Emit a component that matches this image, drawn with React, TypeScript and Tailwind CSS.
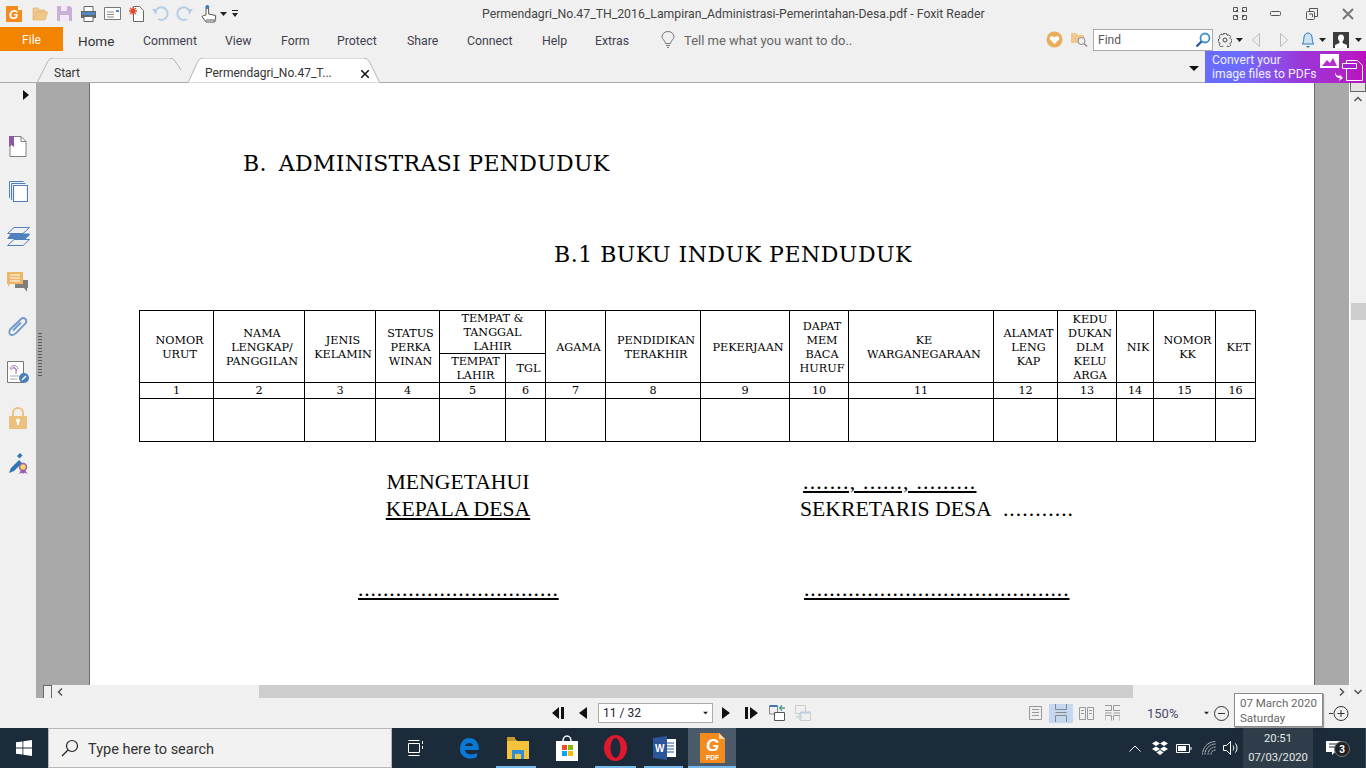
import type { ReactNode } from "react";

const uiFont = "font-['Roboto','Liberation_Sans',sans-serif]";

type Col = { w: string; lines: string[] };

const columnsBefore: Col[] = [
  { w: "w-[74px]", lines: ["NOMOR", "URUT"] },
  { w: "w-[91px]", lines: ["NAMA", "LENGKAP/", "PANGGILAN"] },
  { w: "w-[71px]", lines: ["JENIS", "KELAMIN"] },
  { w: "w-[64px]", lines: ["STATUS", "PERKA", "WINAN"] },
];

const columnsAfter: Col[] = [
  { w: "w-[60px]", lines: ["AGAMA"] },
  { w: "w-[95px]", lines: ["PENDIDIKAN", "TERAKHIR"] },
  { w: "w-[89px]", lines: ["PEKERJAAN"] },
  { w: "w-[59px]", lines: ["DAPAT", "MEM", "BACA", "HURUF"] },
  { w: "w-[145px]", lines: ["KE", "WARGANEGARAAN"] },
  { w: "w-[64px]", lines: ["ALAMAT", "LENG", "KAP"] },
  { w: "w-[59px]", lines: ["KEDU", "DUKAN", "DLM", "KELU", "ARGA"] },
  { w: "w-[37px]", lines: ["NIK"] },
  { w: "w-[62px]", lines: ["NOMOR", "KK"] },
  { w: "w-[40px]", lines: ["KET"] },
];

const numbers = Array.from({ length: 16 }, (_, i) => i + 1);

function Cell({ lines, rowSpan, colSpan }: { lines: string[]; rowSpan?: number; colSpan?: number }) {
  return (
    <th rowSpan={rowSpan} colSpan={colSpan} className={`border border-black p-0 text-center font-normal align-middle whitespace-pre-line ${colSpan ? "" : "pl-[6px]"}`}>
      <span className="relative top-px">{lines.join("\n")}</span>
    </th>
  );
}

function Caret({ className = "" }: { className?: string }) {
  return (
    <svg width="7" height="4" viewBox="0 0 7 4" className={className}>
      <path d="M0 0h7L3.5 4z" fill="#222" />
    </svg>
  );
}

function AppIcon() {
  return (
    <svg width="18" height="18" viewBox="0 0 18 18">
      <path d="M1 1h12l4 4v12H1z" fill="#f58a1f" />
      <path d="M13 1l4 4h-4z" fill="#fff" />
      <text x="4" y="14" fontSize="12" fontWeight="700" fontStyle="italic" fill="#fff" fontFamily="Liberation Sans">G</text>
    </svg>
  );
}

function TopBar() {
  return (
    <div className="flex h-[27px] items-center bg-[#f0f0f0] relative">
      <div className="ml-[5px] flex items-center">
        <AppIcon />
        <svg width="17" height="15" viewBox="0 0 17 15" className="ml-[9px]">
          <path d="M1 14V2h5l2 2h5v2H5L1 14h12l3-8H5" fill="#f0c78a" stroke="#e5b673" strokeWidth=".7" />
        </svg>
        <svg width="15" height="15" viewBox="0 0 15 15" className="ml-[8px]">
          <path d="M0 0h13l2 2v13H0z" fill="#c9aed6" />
          <path d="M4 0h6v5H4zM3 9h9v6H3z" fill="#f0e9f3" />
        </svg>
        <svg width="17" height="16" viewBox="0 0 17 16" className="ml-[8px]">
          <path d="M4 .5h9v5H4z" fill="#fff" stroke="#666" />
          <path d="M1 5h15v7H1z" fill="#666" />
          <path d="M2 6h13v3H2z" fill="#4d8ac4" />
          <path d="M4 10.5h9v5H4z" fill="#fff" stroke="#666" />
        </svg>
        <svg width="17" height="13" viewBox="0 0 17 13" className="ml-[7px]">
          <path d="M.5.5h16v12H.5z" fill="#fff" stroke="#777" />
          <path d="M3 5h7M3 7.500h7M3 10h7" stroke="#888" />
          <path d="M12 3h3v2h-3z" fill="#4d8ac4" />
        </svg>
        <svg width="15" height="16" viewBox="0 0 15 16" className="ml-[8px]">
          <path d="M4.500 4.500V.5h6l4 4v11H4.500z" fill="#fff" stroke="#666" />
          <path d="M4 1v8M0 5h8M1 2l6 6M7 2L1 8" stroke="#e0492c" strokeWidth="1.300" />
        </svg>
        <svg width="17" height="15" viewBox="0 0 17 15" className="ml-[8px]" fill="none">
          <path d="M3 7a6.300 6.300 0 1 1 3 6" stroke="#b4cee6" strokeWidth="2" />
          <path d="M0 3l5 0-1 6z" fill="#b4cee6" />
        </svg>
        <svg width="17" height="15" viewBox="0 0 17 15" className="ml-[7px]" fill="none">
          <path d="M14 7a6.300 6.300 0 1 0-3 6" stroke="#b4cee6" strokeWidth="2" />
          <path d="M17 3l-5 0 1 6z" fill="#b4cee6" />
        </svg>
        <svg width="17" height="18" viewBox="0 0 17 18" className="ml-[8px]" fill="none">
          <path d="M5 10V4a1.300 1.300 0 0 1 2.600 0v5l7 1.500v4l-1 2.500H5L1 11.500l1.500-1z" fill="#fff" stroke="#555" />
          <circle cx="6.300" cy="2" r="2" fill="#3f78b5" />
          <path d="M5 15h9" stroke="#555" />
        </svg>
        <Caret className="ml-[2px]" />
        <svg width="6" height="7" viewBox="0 0 6 7" className="ml-[5px]">
          <path d="M0 0h6v1H0zM0 3h6L3 7z" fill="#222" />
        </svg>
      </div>
      <div className={`absolute left-[482px] top-[5px] text-[12.250px] leading-[18px] text-[#444] whitespace-nowrap ${uiFont}`}>
        Permendagri_No.47_TH_2016_Lampiran_Administrasi-Pemerintahan-Desa.pdf - Foxit Reader
      </div>
      <div className="ml-auto flex items-center">
        <svg width="14" height="13" viewBox="0 0 14 13" fill="none" stroke="#555">
          <path d="M.5.5h4v4h-4zM9.500.5h4v4h-4zM.5 8.500h4v4h-4zM9.500 8.500h4v4h-4z" />
          <path d="M3 3l2 2M11 3L9 5M3 10l2-2M11 10L9 8" />
        </svg>
        <svg width="11" height="5" viewBox="0 0 11 5" fill="none" stroke="#555" className="ml-[23px]">
          <rect x=".5" y=".5" width="10" height="4" rx="1" />
        </svg>
        <svg width="12" height="12" viewBox="0 0 12 12" fill="none" stroke="#555" className="ml-[25px]">
          <rect x=".5" y="3.500" width="8" height="8" rx="1" />
          <path d="M3.500 3V.5h8v8H9" />
          <path d="M3 6h3.500v3" />
        </svg>
        <svg width="12" height="12" viewBox="0 0 12 12" fill="none" stroke="#777" strokeWidth="2" className="ml-[24px] mr-[12px]">
          <path d="M1 1l10 10M11 1L1 11" />
        </svg>
      </div>
    </div>
  );
}

const menus: [string, string][] = [
  ["Comment", "w-[82px]"],
  ["View", "w-[56px]"],
  ["Form", "w-[56px]"],
  ["Protect", "w-[70px]"],
  ["Share", "w-[60px]"],
  ["Connect", "w-[75px]"],
  ["Help", "w-[53px]"],
  ["Extras", "w-[66px]"],
];

function RibbonTabs() {
  return (
    <div className={`flex h-[25px] bg-[#f0f0f0] ${uiFont}`}>
      <div className="flex h-[24px] w-[63px] items-center justify-center bg-[#f38400] pt-[2px] text-[12px] text-white">File</div>
      <div className="ml-[15px] w-[65px] text-[13.500px] leading-[29px] text-[#333]">Home</div>
      {menus.map(([label, w]) => (
        <div key={label} className={`${w} text-[12.300px] leading-[29px] text-[#3f3f4f]`}>
          {label}
        </div>
      ))}
      <div className="flex items-center">
        <svg width="14" height="17" viewBox="0 0 14 17" fill="none" stroke="#777">
          <path d="M4.500 12.500C4 9 1 8.500 1 5.500a6 5 0 0 1 12 0c0 3-3 3.500-3.500 7zM5 14.500h4M6 16.500h2" />
        </svg>
        <span className="ml-[9px] pt-[2px] text-[13px] text-[#666]">Tell me what you want to do..</span>
      </div>
      <div className="ml-auto flex items-center">
        <svg width="17" height="17" viewBox="0 0 17 17">
          <circle cx="8.500" cy="8.500" r="8" fill="#e9ad5e" />
          <path d="M8.500 13L4 8.500C2.500 6 6.500 3.500 8.500 6.500c2-3 6-.5 4.500 2z" fill="#fff" />
        </svg>
        <svg width="17" height="15" viewBox="0 0 17 15" className="ml-[8px]">
          <path d="M0 1h5l2 2h6v8H0z" fill="#efc88f" />
          <circle cx="10.500" cy="9" r="3.500" fill="#f0f0f0" stroke="#888" />
          <path d="M13 11.500l3 3" stroke="#888" strokeWidth="1.300" />
        </svg>
        <div className="ml-[5px] flex h-[22px] w-[120px] items-center border border-[#aaa] bg-white pl-[4px] text-[12px] text-[#555]">
          Find
          <svg width="16" height="16" viewBox="0 0 16 16" fill="none" className="ml-auto mr-[1px]">
            <circle cx="10" cy="6" r="4.500" stroke="#3f8fd0" strokeWidth="1.800" />
            <path d="M6.500 9.500L1.500 14.500" stroke="#2c5f94" strokeWidth="2.400" />
          </svg>
        </div>
        <svg width="14" height="14" viewBox="0 0 14 14" fill="none" stroke="#444" className="ml-[5px]">
          <path d="M5.500.5h3l.5 2 2-.8 1.800 2-1 1.800 1.700.9v2.800l-1.700.9 1 1.800-1.800 2-2-.8-.5 1.400h-3l-.5-1.400-2 .8-1.800-2 1-1.800-1.700-.9V5.800l1.700-.9-1-1.800 1.800-2 2 .8z" strokeDasharray="2 .6" />
          <circle cx="7" cy="7" r="2" />
        </svg>
        <Caret className="ml-[4px]" />
        <svg width="8" height="14" viewBox="0 0 8 14" fill="none" stroke="#bbb" className="ml-[9px]">
          <path d="M7.500.5v13L.5 7z" />
        </svg>
        <svg width="8" height="14" viewBox="0 0 8 14" fill="none" stroke="#bbb" className="ml-[20px]">
          <path d="M.5.5v13L7.500 7z" />
        </svg>
        <svg width="14" height="16" viewBox="0 0 14 16" className="ml-[13px]">
          <path d="M1 12c2-1 1.500-4 2-7 .5-3 2.500-4 4-4s3.500 1 4 4c.5 3 0 6 2 7z" fill="#cfe3f5" stroke="#2e78ba" />
          <path d="M5 14h4l-2 2z" fill="#2e78ba" />
        </svg>
        <Caret className="ml-[4px]" />
        <svg width="16" height="16" viewBox="0 0 16 16" className="ml-[7px]">
          <path d="M0 0h16v16H0z" fill="#3c3c3c" />
          <path d="M8 2.500c2 0 3 1.500 3 3.500 0 1.500-.8 2.800-1.500 3.500v1.500L14 13v3H2v-3l4.500-2V9.500C5.800 8.800 5 7.500 5 6c0-2 1-3.500 3-3.500z" fill="#fff" />
        </svg>
        <Caret className="ml-[6px] mr-[4px]" />
      </div>
    </div>
  );
}

function DocTabs() {
  return (
    <div className={`relative flex h-[31px] border-b border-[#aaa] bg-[#f0f0f0] ${uiFont}`}>
      <svg width="345" height="25" viewBox="0 0 345 25" className="absolute left-[37px] top-[6px]" fill="none">
        <path d="M0 25L11 3q2-3 5-3h116q4 0 6 3l6 9" stroke="#b5b5b5" />
        <path d="M151 25L161 3q2-3 5-3h160q4 0 6 3l11 22z" fill="#fff" stroke="#b5b5b5" />
      </svg>
      <span className="absolute left-[54px] top-[13px] text-[12px] leading-[16px] text-[#333]">Start</span>
      <span className="absolute left-[205px] top-[13px] text-[12px] leading-[16px] text-[#333]">Permendagri_No.47_T...</span>
      <svg width="8" height="8" viewBox="0 0 8 8" className="absolute left-[361px] top-[18px]" stroke="#111" strokeWidth="1.500">
        <path d="M0 0l8 8M8 0L0 8" />
      </svg>
      <svg width="10" height="5" viewBox="0 0 10 5" className="ml-auto mr-[6px] mt-[14px]">
        <path d="M0 0h10L5 5z" fill="#111" />
      </svg>
      <div className="relative -mt-px flex h-[32px] w-[161px] items-start bg-gradient-to-r from-[#6a6cff] from-20% via-[#9a35d8] via-60% to-[#bb0cc0] pl-[7px] pt-[3px] text-[12.200px] leading-[13.500px] text-[#f0eeff]">
        <span className="whitespace-nowrap">
          Convert your
          <br />
          image files to PDFs
        </span>
        <svg width="44" height="28" viewBox="0 0 44 28" className="absolute left-[115px] top-[3px]" fill="none">
          <path d="M0 0h19v14H0z" fill="#fff" />
          <path d="M2 12l5-6 3 3 3-5 4 8z" fill="#b52dd0" />
          <path d="M26.500 6.500h11l5 5v15h-16z" stroke="#fff" />
          <path d="M22.500 9.500h14v5h-14z" fill="#a51fd0" stroke="#fff" />
          <path d="M15 18c1 3 2 4 5 4l-1-2 4 4-4 3 1-3c-3 0-5-2-5-6z" fill="#fff" />
        </svg>
      </div>
    </div>
  );
}

function SideIcon({ children }: { children: ReactNode }) {
  return <div className="flex h-[45.300px] items-center justify-center">{children}</div>;
}

function Sidebar() {
  return (
    <div className="w-[36px] shrink-0 bg-[#f0f0f0]">
      <div className="flex h-[40.500px] justify-end pr-[7px] pt-[7px]">
        <svg width="6" height="10" viewBox="0 0 6 10">
          <path d="M0 0l6 5-6 5z" fill="#111" />
        </svg>
      </div>
      <SideIcon>
        <svg width="18" height="21" viewBox="0 0 18 21" fill="none">
          <path d="M1 .5h11l5 5v15H1z" fill="#fff" stroke="#808080" />
          <path d="M12 .5v5h5" stroke="#808080" />
          <path d="M0 0h5v11L2.500 9 0 11z" fill="#8e58a8" />
        </svg>
      </SideIcon>
      <SideIcon>
        <svg width="19" height="21" viewBox="0 0 19 21" fill="none" stroke="#4f81bd">
          <path d="M.5 17V.5h14M2.500 19V2.500h14" />
          <path d="M4.500 4.500h14v16h-14z" fill="#fff" strokeWidth="1.200" />
        </svg>
      </SideIcon>
      <SideIcon>
        <svg width="23" height="19" viewBox="0 0 23 19" fill="none" stroke="#4f81bd">
          <path d="M7 .5h15.500L16 6.500H.5zM.5 11.500l3-3M22.500 8l-5 4" />
          <path d="M4 7h18.500l-4 4.500H1z" fill="#4f81bd" />
          <path d="M7 12.500h15.500L16 18.500H.5zM7 12.500" />
        </svg>
      </SideIcon>
      <SideIcon>
        <svg width="22" height="21" viewBox="0 0 22 21">
          <path d="M8 8h13v8h-1v4l-3-4H8z" fill="#7f7f7f" />
          <path d="M0 0h16v12H3l-2 3v-3H0z" fill="#edb666" />
          <path d="M3 3h10M3 6h10M3 9h10" stroke="#fff" />
        </svg>
      </SideIcon>
      <SideIcon>
        <svg width="20" height="21" viewBox="0 0 20 21" fill="none" stroke="#6d9ac9" strokeWidth="1.800">
          <path d="M6 9l7-7c3-2.500 7 1 4.500 4.500L8 16c-2.500 3-7.500 3-6.500-2 .2-1 1-2 1.500-2.500L11 4" />
          <path d="M5 13.500l8-8" />
        </svg>
      </SideIcon>
      <SideIcon>
        <svg width="23" height="23" viewBox="0 0 23 23" fill="none">
          <path d="M.5.500h16v21H.5z" fill="#fff" stroke="#777" />
          <path d="M3 8c1-4 7-5 8 0M4 9c1-3 5-3 6 1M6 7c2-1 3 1 3 3v3" stroke="#a86cc1" />
          <path d="M3 15h9M3 18h7" stroke="#aaa" />
          <circle cx="17" cy="17" r="5" fill="#4a7fb8" />
          <path d="M15 19l4-4" stroke="#fff" strokeWidth="1.500" />
        </svg>
      </SideIcon>
      <SideIcon>
        <svg width="18" height="22" viewBox="0 0 18 22" fill="none">
          <path d="M4 9V6a5 5 0 0 1 10 0v3" stroke="#ecc07f" strokeWidth="2" />
          <path d="M0 9h18v13H0z" fill="#ecc07f" />
          <path d="M8 13h2v5H8z" fill="#fff" />
          <circle cx="9" cy="13.500" r="2" fill="#fff" />
        </svg>
      </SideIcon>
      <SideIcon>
        <svg width="21" height="21" viewBox="0 0 21 21" fill="none">
          <path d="M1 20l2-5 8-8 3 3-8 8z" fill="#2f75b5" />
          <path d="M9 3l3-3 2.500 2.500-3 3z" fill="#2f75b5" />
          <circle cx="15" cy="14" r="3.500" fill="#f3da5c" stroke="#9a5bb5" strokeWidth="1.500" />
          <path d="M11 21l2-4h4l2.500 4-3-1.200-1.500 1-1.500-1z" fill="#9a5bb5" />
        </svg>
      </SideIcon>
    </div>
  );
}

function Page() {
  return (
    <div className="min-w-0 flex-1 overflow-hidden border-x border-[#6b6b6b] bg-white text-black">
      <div className="ml-[153px] mt-[66px] h-[30px] whitespace-nowrap font-['DejaVu_Serif',serif] text-[22px] leading-[30px] tracking-[0.3px]">
        B.<span className="ml-[12px]">ADMINISTRASI PENDUDUK</span>
      </div>
      <div className="ml-[464px] mt-[61px] h-[30px] whitespace-nowrap font-['DejaVu_Serif',serif] text-[22px] leading-[30px] tracking-[0.5px]">
        B.1 BUKU INDUK PENDUDUK
      </div>
      <table className="ml-[49px] mt-[40px] w-[1117px] table-fixed border-collapse font-['DejaVu_Serif',serif] text-[11.200px] leading-[14px]">
        <colgroup>
          {columnsBefore.map((c) => (
            <col key={c.lines[0]} className={c.w} />
          ))}
          <col className="w-[66px]" />
          <col className="w-[40px]" />
          {columnsAfter.map((c) => (
            <col key={c.lines[0]} className={c.w} />
          ))}
        </colgroup>
        <thead>
          <tr className="h-[43px]">
            {columnsBefore.map((c) => (
              <Cell key={c.lines[0]} lines={c.lines} rowSpan={2} />
            ))}
            <Cell lines={["TEMPAT &", "TANGGAL", "LAHIR"]} colSpan={2} />
            {columnsAfter.map((c) => (
              <Cell key={c.lines[0]} lines={c.lines} rowSpan={2} />
            ))}
          </tr>
          <tr className="h-[29px]">
            <Cell lines={["TEMPAT", "LAHIR"]} />
            <Cell lines={["TGL"]} />
          </tr>
        </thead>
        <tbody>
          <tr className="h-[16px]">
            {numbers.map((n) => (
              <td key={n} className="border border-black p-0 text-center leading-[14px]">
                {n}
              </td>
            ))}
          </tr>
          <tr className="h-[43px]">
            {numbers.map((n) => (
              <td key={n} className="border border-black p-0" />
            ))}
          </tr>
        </tbody>
      </table>
      <div className="mt-[27px] flex font-['Liberation_Serif',serif] text-[21.700px] leading-[27px]">
        <div className="ml-[268px] w-[200px] text-center">
          <div>MENGETAHUI</div>
          <div className="underline underline-offset-2">KEPALA DESA</div>
          <div className="mt-[53px] tracking-[0.85px] underline decoration-2 underline-offset-2">................................</div>
        </div>
        <div className="ml-[242px]">
          <div className="ml-[3px] tracking-[1.250px] underline decoration-2 underline-offset-2">......., ......, .........</div>
          <div>
            SEKRETARIS DESA <span className="ml-[7px] tracking-[1.050px]">...........</span>
          </div>
          <div className="ml-[4px] mt-[53px] tracking-[0.9px] underline decoration-2 underline-offset-2">..........................................</div>
        </div>
      </div>
    </div>
  );
}

function ViewIcon({ children, active }: { children: ReactNode; active?: boolean }) {
  return (
    <div className={`flex h-[19px] items-center justify-center ${active ? "bg-[#c3d7f0]" : ""}`}>{children}</div>
  );
}

function StatusBar() {
  return (
    <div className={`relative flex h-[30px] items-center bg-[#f0f0f0] ${uiFont}`}>
      <svg width="14" height="12" viewBox="0 0 14 12" className="ml-[552px]" fill="#111">
        <path d="M7 0v12L0 6zM9 0h3v12H9z" />
      </svg>
      <svg width="8" height="12" viewBox="0 0 8 12" className="ml-[13px]" fill="#111">
        <path d="M8 0v12L0 6z" />
      </svg>
      <div className="ml-[11px] flex h-[20px] w-[115px] items-center border border-[#aaa] bg-white pl-[4px] text-[12px] text-[#223]">
        11 / 32
        <Caret className="ml-auto mr-[3px] scale-75" />
      </div>
      <svg width="8" height="12" viewBox="0 0 8 12" className="ml-[9px]" fill="#111">
        <path d="M0 0v12l8-6z" />
      </svg>
      <svg width="14" height="12" viewBox="0 0 14 12" className="ml-[15px]" fill="#111">
        <path d="M0 0h3v12H0zM5 0v12l8-6z" />
      </svg>
      <svg width="17" height="16" viewBox="0 0 17 16" className="ml-[10px]" fill="none">
        <path d="M.5 1h8v8h-8z" stroke="#888" />
        <path d="M.5 1h8" stroke="#3f78b5" strokeWidth="2" />
        <path d="M5.500 7.500h10v8h-10z" fill="#fff" stroke="#555" />
        <path d="M16 3h-5M13 .5L10.500 3 13 5.500" stroke="#4aa08e" strokeWidth="1.300" />
      </svg>
      <svg width="17" height="16" viewBox="0 0 17 16" className="ml-[9px]" fill="none">
        <path d="M.5.500h10v8h-10z" stroke="#ccc" />
        <path d="M5.500 7.500h10v8h-10z" fill="#f0f0f0" stroke="#ccc" />
        <path d="M5.500 7.500h10" stroke="#b9cde3" strokeWidth="2" />
        <path d="M1 12h5M4 9.500L6.500 12 4 14.500" stroke="#bfdad3" strokeWidth="1.300" />
      </svg>
      <div className="ml-[217px]">
        <ViewIcon>
          <svg width="13" height="14" viewBox="0 0 13 14" fill="none" stroke="#999">
            <path d="M.5.500h12v13H.5zM3 3.500h7M3 6.500h7M3 9.500h7" />
          </svg>
        </ViewIcon>
      </div>
      <div className="ml-[7px] w-[24px]">
        <ViewIcon active>
          <svg width="12" height="18" viewBox="0 0 12 18" fill="none" stroke="#888">
            <path d="M.5 0v5.500h11V0M.5 8.500h11M.5 18v-6.500h11V18" />
          </svg>
        </ViewIcon>
      </div>
      <div className="ml-[6px]">
        <ViewIcon>
          <svg width="15" height="13" viewBox="0 0 15 13" fill="none" stroke="#999">
            <path d="M.5.500h6v12h-6zM8.500.500h6v12h-6zM2 3.500h3M2 6.500h3M10 3.500h3M10 6.500h3" />
          </svg>
        </ViewIcon>
      </div>
      <div className="ml-[11px]">
        <ViewIcon>
          <svg width="15" height="16" viewBox="0 0 15 16" fill="none" stroke="#999">
            <path d="M0 .5h6.500v5H0M15 .5H8.500v5H15M0 8h6.500M15 8H8.500M0 15.500v-5h6.500v5M15 15.500v-5H8.500v5" />
          </svg>
        </ViewIcon>
      </div>
      <span className="ml-[27px] w-[32px] whitespace-nowrap pt-[2px] text-[13px] text-[#4a4a6a]">150%</span>
      <Caret className="ml-[24px] scale-75" />
      <svg width="15" height="15" viewBox="0 0 15 15" fill="none" stroke="#333" className="ml-[4px]">
        <circle cx="7.500" cy="7.500" r="7" />
        <path d="M4 7.500h7" />
      </svg>
      <svg width="20" height="15" viewBox="0 0 20 15" fill="none" stroke="#333" className="ml-[100px]">
        <path d="M0 7.500h4" />
        <circle cx="12" cy="7.500" r="7" />
        <path d="M8.500 7.500h7M12 4v7" />
      </svg>
      <div className="absolute left-[1234px] top-[-5px] h-[34px] w-[89px] border border-[#8a8a8a] bg-white pl-[5px] pt-[2px] text-[11.500px] leading-[15px] text-[#666] shadow-[1px_1px_1px_rgba(0,0,0,0.35)]">
        07 March 2020
        <br />
        Saturday
      </div>
    </div>
  );
}

function Taskbar() {
  return (
    <div className={`flex h-[40px] items-stretch bg-[#1c2b3a] ${uiFont}`}>
      <div className="flex w-[48px] items-center justify-center">
        <svg width="16" height="16" viewBox="0 0 16 16" fill="#fff">
          <path d="M0 2.300l6.500-.9v6.200H0zM7.300 1.300L16 0v7.600H7.300zM0 8.400h6.500v6.200L0 13.700zM7.300 8.400H16V16l-8.700-1.200z" />
        </svg>
      </div>
      <div className="flex w-[344px] items-center border border-[#b8b8b8] bg-[#f2f2f2] pl-[12px] text-[14.500px] text-[#333]">
        <svg width="18" height="18" viewBox="0 0 18 18" fill="none" stroke="#222" strokeWidth="1.200">
          <circle cx="11" cy="7" r="5.500" />
          <path d="M7 11l-6 6" />
        </svg>
        <span className="ml-[9px] mt-[3px]">Type here to search</span>
      </div>
      <div className="flex w-[52px] items-center pl-[16px]">
        <svg width="16" height="18" viewBox="0 0 16 18" fill="none" stroke="#fff">
          <path d="M.5 4.500h11v9H.5zM.5 1.500h11M.5 16.500h11M14.500 2v3M14.500 7v3" />
        </svg>
      </div>
      <div className="flex w-[49px] items-center justify-center">
        <svg width="20" height="21" viewBox="0 0 20 21">
          <path d="M10 0c6 0 10 4 10 12H6c0 4 6 6 12 3v4c-8 4-18 0-17-9C1.500 4 5 0 10 0zm-4 8h8c0-4-7-4-8 0z" fill="#0a78d7" />
        </svg>
      </div>
      <div className="relative flex w-[49px] items-center justify-center">
        <svg width="22" height="22" viewBox="0 0 22 22">
          <path d="M0 2h8l2 2h12v18H0z" fill="#f5c33b" />
          <path d="M0 0h8v4H0z" fill="#c99a25" />
          <path d="M5 13h12v9h-3v-5H8v5H5z" fill="#2c8fd8" />
        </svg>
        <div className="absolute bottom-0 left-[3px] h-[2px] w-[40px] bg-[#76b9ed]" />
      </div>
      <div className="flex w-[49px] items-center justify-center">
        <svg width="22" height="26" viewBox="0 0 22 26">
          <path d="M7 6a4 5 0 0 1 8 0" fill="none" stroke="#fff" strokeWidth="1.500" />
          <path d="M0 6h22v20H0z" fill="#fff" />
          <path d="M6 10h5v5H6z" fill="#f25022" />
          <path d="M12 10h5v5h-5z" fill="#7fba00" />
          <path d="M6 16h5v5H6z" fill="#00a4ef" />
          <path d="M12 16h5v5h-5z" fill="#ffb900" />
        </svg>
      </div>
      <div className="relative flex w-[49px] items-center justify-center">
        <svg width="23" height="26" viewBox="0 0 23 26">
          <ellipse cx="11.500" cy="13" rx="11.500" ry="13" fill="#e0182d" />
          <ellipse cx="11.500" cy="13" rx="5" ry="10" fill="#1c2b3a" />
        </svg>
        <div className="absolute bottom-0 left-[4px] h-[2px] w-[41px] bg-[#76b9ed]" />
      </div>
      <div className="relative flex w-[48px] items-center justify-center">
        <svg width="23" height="24" viewBox="0 0 23 24">
          <path d="M9 3h14v18H9z" fill="#fff" />
          <path d="M11 7h10M11 10h10M11 13h10M11 16h10" stroke="#2b579a" />
          <path d="M0 2l14-2v24L0 22z" fill="#2b579a" />
          <text x="2" y="16" fontSize="10" fontWeight="700" fill="#fff" fontFamily="Liberation Sans">W</text>
        </svg>
        <div className="absolute bottom-0 left-[4px] h-[2px] w-[39px] bg-[#76b9ed]" />
      </div>
      <div className="relative flex w-[48px] items-center justify-center bg-[#4a5a68]">
        <svg width="25" height="30" viewBox="0 0 25 30">
          <path d="M0 0h19l6 6v24H0z" fill="#f58a1f" />
          <path d="M19 0l6 6h-6z" fill="#fbd9a8" />
          <text x="6" y="18" fontSize="17" fontWeight="700" fontStyle="italic" fill="#fff" fontFamily="Liberation Sans">G</text>
          <text x="6" y="27" fontSize="6.500" fontWeight="700" fill="#fff" fontFamily="Liberation Sans">PDF</text>
        </svg>
        <div className="absolute bottom-0 left-0 h-[2px] w-full bg-[#76b9ed]" />
      </div>
      <div className="ml-auto flex items-center">
        <svg width="12" height="7" viewBox="0 0 12 7" fill="none" stroke="#fff">
          <path d="M.5 6.500L6 1l5.500 5.500" />
        </svg>
        <svg width="16" height="14" viewBox="0 0 16 14" fill="#fff" className="ml-[11px]">
          <path d="M4 0l4 2.500L4 5 0 2.500zM12 0l4 2.500L12 5 8 2.500zM4 5.500L8 8l-4 2.500L0 8zM12 5.500L16 8l-4 2.500L8 8zM4.500 11.500L8 9l3.500 2.500L8 14z" />
        </svg>
        <svg width="16" height="9" viewBox="0 0 16 9" className="ml-[8px]" fill="none" stroke="#fff">
          <path d="M.5.500h13v8H.5z" />
          <path d="M2 2h8v5H2z" fill="#fff" stroke="none" />
          <path d="M15 3v3" />
        </svg>
        <svg width="14" height="14" viewBox="0 0 14 14" fill="none" stroke="#ccc" className="ml-[10px]">
          <path d="M.5 13.500a13 13 0 0 1 13-13M3 13.500a10.500 10.500 0 0 1 10.500-10.500M6 13.500A7.500 7.500 0 0 1 13.500 6M9 13.500A4.500 4.500 0 0 1 13.500 9" strokeDasharray="2 .5" />
        </svg>
        <svg width="16" height="14" viewBox="0 0 16 14" fill="none" stroke="#fff" className="ml-[7px]">
          <path d="M.5 4.500h3l4-4v13l-4-4h-3zM10 4.500c1 1.500 1 3.500 0 5M12.500 2.500c2 3 2 6 0 9" />
        </svg>
        <div className="ml-[4px] flex h-full w-[70px] flex-col items-center justify-center bg-[#2f3d4a] text-[11.200px] leading-[19px] text-[#e8e8e8]">
          <span>20:51</span>
          <span>07/03/2020</span>
        </div>
        <div className="relative flex h-full w-[42px] items-center justify-center">
          <svg width="16" height="15" viewBox="0 0 16 15" fill="#fff">
            <path d="M0 0h16v11H9l-3 3v-3H0z" />
            <path d="M3 3h10M3 6h10" stroke="#1c2b3a" />
          </svg>
          <div className="absolute left-[21px] top-[13px] flex h-[16px] w-[16px] items-center justify-center rounded-full border border-[#777] bg-[#222] text-[10px] font-bold text-white">
            3
          </div>
        </div>
        <div className="ml-[10px] h-full w-px bg-[#3a4956]" />
      </div>
    </div>
  );
}

export default function App() {
  return (
    <div className="flex h-[768px] w-[1366px] flex-col overflow-hidden bg-[#f0f0f0]">
      <TopBar />
      <RibbonTabs />
      <DocTabs />
      <div className="flex h-[615px]">
        <Sidebar />
        <div className="flex min-w-0 flex-1 flex-col bg-[#a9a9a9]">
          <div className="relative flex min-h-0 flex-1 pl-[53px] pr-[34px]">
            <div className="absolute left-[2px] top-[249px] h-[44px] w-[4px] bg-[radial-gradient(#555_35%,transparent_40%)] bg-[length:2px_3px]" />
            <Page />
          </div>
          <div className="flex h-[13px]">
            <div className="ml-[7px] h-[13px] w-[9px] border border-b-0 border-[#666] bg-[#f0f0f0]" />
            <div className="flex min-w-0 flex-1 items-center bg-[#f0f0f0]">
              <svg width="6" height="8" viewBox="0 0 6 8" fill="none" stroke="#555" strokeWidth="1.500" className="ml-[5px]">
                <path d="M5 .5L1.500 4 5 7.500" />
              </svg>
              <div className="ml-[196px] h-full w-[874px] bg-[#cdcdcd]" />
              <svg width="6" height="8" viewBox="0 0 6 8" fill="none" stroke="#555" strokeWidth="1.500" className="ml-auto mr-[4px]">
                <path d="M1 .5L4.500 4 1 7.500" />
              </svg>
            </div>
          </div>
        </div>
        <div className="flex w-[17px] shrink-0 flex-col items-center border-l border-white bg-[#f0f0f0]">
          <div className="h-[9px] w-full border border-t-0 border-[#666] bg-[#e3e3e3]" />
          <svg width="8" height="6" viewBox="0 0 8 6" fill="none" stroke="#555" strokeWidth="1.500" className="mt-[4px]">
            <path d="M.5 5L4 1.500 7.500 5" />
          </svg>
          <div className="mt-[201px] h-[17px] w-[15px] bg-[#cdcdcd]" />
          <svg width="8" height="6" viewBox="0 0 8 6" fill="none" stroke="#555" strokeWidth="1.500" className="mt-auto mb-[3px]">
            <path d="M.5 1L4 4.500 7.500 1" />
          </svg>
        </div>
      </div>
      <StatusBar />
      <Taskbar />
    </div>
  );
}
